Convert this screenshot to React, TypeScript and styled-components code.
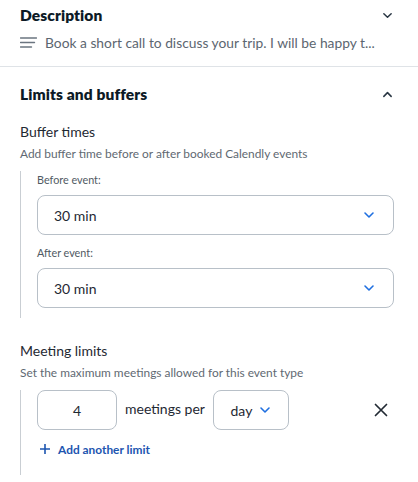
import React from 'react';
import styled, { createGlobalStyle } from 'styled-components';

const GlobalStyle = createGlobalStyle`
  html, body {
    margin: 0;
    padding: 0;
    background: #ffffff;
  }
  body {
    font-family: Lato, "Noto Sans", sans-serif;
    color: #1f2933;
  }
`;

const ChevronDown = ({ color = '#2a3744', size = 12 }: { color?: string; size?: number }) => (
  <svg width={size} height={size} viewBox="0 0 12 12" fill="none">
    <path d="M2 4l4 4 4-4" stroke={color} strokeWidth="1.6" strokeLinecap="round" strokeLinejoin="round" />
  </svg>
);

const ChevronUp = () => (
  <svg width="11" height="11" viewBox="0 0 12 12" fill="none">
    <path d="M2 8l4-4 4 4" stroke="#2a3744" strokeWidth="1.7" strokeLinecap="round" strokeLinejoin="round" />
  </svg>
);

const LinesIcon = () => (
  <svg width="17" height="11" viewBox="0 0 17 11" fill="none">
    <path d="M0.5 1h16M0.5 5.5h14M0.5 10h11" stroke="#6b7580" strokeWidth="1.4" strokeLinecap="round" />
  </svg>
);

const CloseIcon = () => (
  <svg width="14" height="14" viewBox="0 0 14 14" fill="none">
    <path d="M1.5 1.5l11 11M12.5 1.5l-11 11" stroke="#222a33" strokeWidth="1.7" strokeLinecap="round" />
  </svg>
);

const PlusIcon = () => (
  <svg width="10" height="10" viewBox="0 0 10 10" fill="none">
    <path d="M5 0v10M0 5h10" stroke="#1d55b0" strokeWidth="1.6" />
  </svg>
);

const Page = styled.div`
  width: 418px;
  min-height: 482px;
  background: #fff;
`;

const Section = styled.section<{ $divider?: boolean }>`
  padding: ${p => (p.$divider ? '4px 0 0 20px' : '16px 0 0 20px')};
  padding-right: 24px;
  border-bottom: ${p => (p.$divider ? '1px solid #dfe3e7' : 'none')};
  height: ${p => (p.$divider ? '62px' : 'auto')};
`;

const HeaderRow = styled.div`
  display: flex;
  align-items: center;
  justify-content: space-between;
  height: 22px;
`;

const Title = styled.h2`
  margin: 0;
  font-size: 15.5px;
  font-weight: 800;
  color: #0d1a26;
  letter-spacing: 0.1px;
`;

const IconSlot = styled.div`
  display: flex;
  align-items: center;
  justify-content: center;
  width: 14px;
`;

const Snippet = styled.div`
  display: flex;
  align-items: center;
  gap: 8px;
  margin-top: 6px;
  height: 20px;
  font-size: 13.8px;
  color: #5c6670;
  white-space: nowrap;
`;

const GroupTitle = styled.div<{ $top: number }>`
  margin-top: ${p => p.$top}px;
  font-size: 14px;
  line-height: 20px;
  color: #1f2933;
`;

const Hint = styled.div`
  margin-top: 4px;
  font-size: 11.9px;
  line-height: 16px;
  color: #5f6972;
`;

const Indented = styled.div<{ $top: number; $bottom: number }>`
  margin-top: ${p => p.$top}px;
  border-left: 1px solid #c9ced3;
  padding: 1px 0 ${p => p.$bottom}px 16px;
`;

const FieldLabel = styled.div<{ $top?: number }>`
  margin-top: ${p => p.$top ?? 0}px;
  font-size: 10.8px;
  line-height: 16px;
  color: #4f5962;
`;

const Select = styled.div<{ $width?: number }>`
  box-sizing: border-box;
  width: ${p => (p.$width ? `${p.$width}px` : '100%')};
  height: 40px;
  margin-top: ${p => (p.$width ? 0 : 7)}px;
  border: 1px solid #b8c0c8;
  border-radius: 8px;
  display: flex;
  align-items: center;
  justify-content: ${p => (p.$width ? 'center' : 'space-between')};
  gap: 7px;
  padding: 0 ${p => (p.$width ? 0 : 18)}px 0 ${p => (p.$width ? 0 : 16)}px;
  font-size: 14px;
  color: #1f2933;
`;

const LimitRow = styled.div`
  display: flex;
  align-items: center;
  height: 40px;
  margin-top: -1px;
`;

const NumberInput = styled.div`
  box-sizing: border-box;
  width: 80px;
  height: 40px;
  border: 1px solid #b8c0c8;
  border-radius: 8px;
  display: flex;
  align-items: center;
  justify-content: center;
  font-size: 14px;
  color: #1f2933;
`;

const RowText = styled.span`
  margin: 0 8px;
  font-size: 14px;
  color: #1f2933;
  padding-bottom: 4px;
`;

const RemoveButton = styled.button`
  margin-left: auto;
  margin-right: 6px;
  background: none;
  border: none;
  padding: 0;
  display: flex;
  align-items: center;
`;

const AddLink = styled.a`
  display: flex;
  align-items: center;
  gap: 8px;
  margin-top: 9px;
  padding-left: 3px;
  height: 20px;
  font-size: 11.9px;
  font-weight: 700;
  color: #1d55b0;
  text-decoration: none;
`;

export default function App() {
  return (
    <Page>
      <GlobalStyle />
      <Section $divider>
        <HeaderRow>
          <Title>Description</Title>
          <IconSlot>
            <ChevronDown size={11} />
          </IconSlot>
        </HeaderRow>
        <Snippet>
          <LinesIcon />
          Book a short call to discuss your trip. I will be happy t...
        </Snippet>
      </Section>

      <Section>
        <HeaderRow>
          <Title>Limits and buffers</Title>
          <IconSlot>
            <ChevronUp />
          </IconSlot>
        </HeaderRow>

        <GroupTitle $top={17}>Buffer times</GroupTitle>
        <Hint>Add buffer time before or after booked Calendly events</Hint>
        <Indented $top={9} $bottom={10}>
          <FieldLabel>Before event:</FieldLabel>
          <Select>
            30 min
            <ChevronDown color="#1f6fe0" />
          </Select>
          <FieldLabel $top={10}>After event:</FieldLabel>
          <Select>
            30 min
            <ChevronDown color="#1f6fe0" />
          </Select>
        </Indented>

        <GroupTitle $top={23}>Meeting limits</GroupTitle>
        <Hint>Set the maximum meetings allowed for this event type</Hint>
        <Indented $top={9} $bottom={16}>
          <LimitRow>
            <NumberInput>4</NumberInput>
            <RowText>meetings per</RowText>
            <Select $width={76}>
              day
              <ChevronDown color="#1f6fe0" />
            </Select>
            <RemoveButton aria-label="Remove limit">
              <CloseIcon />
            </RemoveButton>
          </LimitRow>
          <AddLink href="#">
            <PlusIcon />
            Add another limit
          </AddLink>
        </Indented>
      </Section>
    </Page>
  );
}
